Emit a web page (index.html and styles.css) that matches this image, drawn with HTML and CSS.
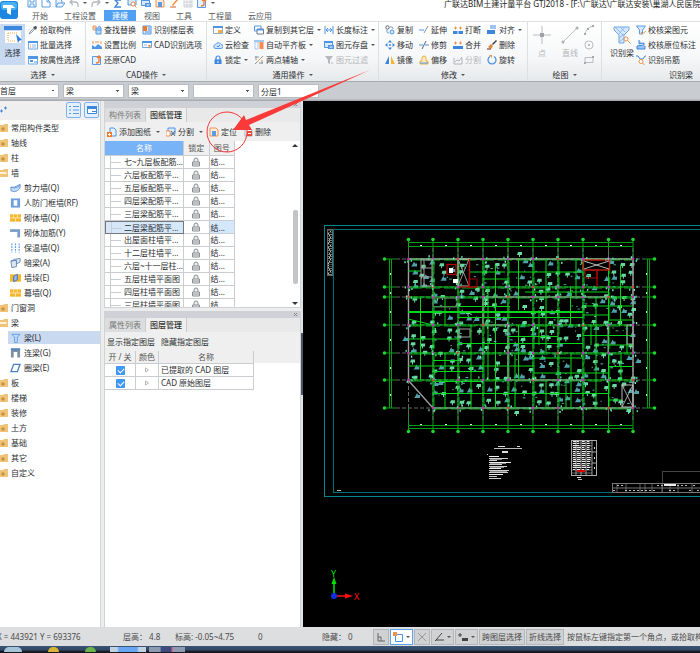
FILE: index.html
```html
<!DOCTYPE html>
<html lang="zh-CN">
<head>
<meta charset="utf-8">
<title>广联达BIM土建计量平台 GTJ2018</title>
<link rel="stylesheet" href="styles.css">
</head>
<body>
<svg class="sprite" aria-hidden="true">
  <symbol id="save" viewBox="0 0 10 10"><path d="M1 1h8v8H1zM3 1v3h4V1M3 9V6h4v3" fill="none" stroke="#5a9be6"/></symbol>
  <symbol id="new" viewBox="0 0 10 10"><path d="M1 1h5l3 3v5H1zM6 1v3h3" fill="none" stroke="#5a9be6"/></symbol>
  <symbol id="open" viewBox="0 0 10 10"><path d="M1 9V1h4l2 2v2M1 9l2-4h7L7 9z" fill="#eaf3ff" stroke="#5a9be6"/></symbol>
  <symbol id="undo" viewBox="0 0 10 10"><path d="M1 4h5q3 0 3 3v2M4 1 1 4l3 3" fill="none" stroke="#b4b8be" stroke-width="1.3"/></symbol>
  <symbol id="redo" viewBox="0 0 10 10"><path d="M9 4H4Q1 4 1 7v2M6 1l3 3-3 3" fill="none" stroke="#b4b8be" stroke-width="1.3"/></symbol>
  <symbol id="sigma" viewBox="0 0 10 10"><path d="M8 2H2l3 3-3 4h6" fill="none" stroke="#3d86dd" stroke-width="1.4"/></symbol>
  <symbol id="find" viewBox="0 0 10 10"><path d="M1 1h8v6H1z" fill="#d6e8fc" stroke="#4e96e5"/><circle cx="6" cy="6" r="2" fill="#fff" stroke="#f08a3c"/><path d="m7.500 7.500 2 2" stroke="#f08a3c"/></symbol>
  <symbol id="pen" viewBox="0 0 10 10"><path d="m3 7 5-6 1 1-5 6z" fill="#f08a3c"/><path d="M1 9h6" stroke="#e05a2a"/></symbol>
  <symbol id="grid" viewBox="0 0 10 10"><path d="M1 1h8v8H1zM1 4h8M1 7h8M4 1v8M7 1v8" fill="none" stroke="#c2c5ca" stroke-width=".8"/></symbol>
  <symbol id="pick" viewBox="0 0 10 10"><path d="m1 9 1-2 4-4 1 1-4 4z" fill="#e8eef6" stroke="#7a8796" stroke-width=".8"/><path d="m5 2 3 3 1-3-1-1z" fill="#3f4a58"/></symbol>
  <symbol id="batch" viewBox="0 0 10 10"><path d="M.5 1.500h9v7.500h-9z" fill="#fff" stroke="#6ea8e8"/><path d="M0 1h10v2H0z" fill="#4e96e5"/><path d="M2 5h1M2 7h1" stroke="#f08a3c"/><path d="M4 5h4M4 7h4" stroke="#8bb8ec"/></symbol>
  <symbol id="attr" viewBox="0 0 10 10"><path d="M.5 1.500h9v7.500h-9z" fill="#fff" stroke="#6ea8e8"/><path d="M0 1h10v3H0zM2 5h3v2H2z" fill="#4e96e5"/><path d="M6 7h3" stroke="#4e96e5"/></symbol>
  <symbol id="replace" viewBox="0 0 10 10"><path d="M1 1h3v2H1zM1 3v2h3" fill="none" stroke="#f0924c"/><path d="M4 3h5v6H4z" fill="#bddafa" stroke="#4e96e5"/><path d="M4 5h5M6 2q2-2 3 1" fill="none" stroke="#4e96e5"/></symbol>
  <symbol id="scale" viewBox="0 0 10 10"><path d="M0 9V5l3 2 3-3 4 3v2z" fill="#4e96e5"/><path d="M1 1v3M9 1v3M3 2h4" stroke="#f0924c"/></symbol>
  <symbol id="restore" viewBox="0 0 10 10"><path d="M.5 1.500h8v8h-8z" fill="#e3f0ff" stroke="#5a9be6"/><path d="M7 1v5q0 2-3 2M5 3l2-2 2 2" fill="none" stroke="#f07a28" stroke-width="1.300"/></symbol>
  <symbol id="floor" viewBox="0 0 10 10"><path d="M1 1h8v8H1z" fill="#dbeafd" stroke="#4e96e5"/><path d="M1 1h4v5H1z" fill="#f07a28"/><path d="M6 3h2M6 5h2M3 7h5" stroke="#4e96e5"/></symbol>
  <symbol id="opts" viewBox="0 0 10 10"><path d="M.5 1.500h9v6h-9z" fill="#fff" stroke="#6ea8e8"/><path d="M0 1h10v2H0z" fill="#4e96e5"/><path d="M2 5h3" stroke="#8bb8ec"/><path d="M6 5h3L7.500 9z" fill="#f0924c"/></symbol>
  <symbol id="def" viewBox="0 0 10 10"><path d="M.5 1.500h9v7h-9z" fill="#fff" stroke="#9ab"/><path d="M0 1h10v2H0z" fill="#4e96e5"/><path d="M5 5h4v3H5z" fill="#f5a94a"/></symbol>
  <symbol id="cloud" viewBox="0 0 10 10"><path d="M3 8.500a2 2 0 0 1-.5-4 3 3 0 0 1 5.500 0 2 2 0 0 1 0 4z" fill="#cfe3fb" stroke="#5a9be6"/><path d="m4 6 1 1 2-2" fill="none" stroke="#3d86dd"/></symbol>
  <symbol id="lock" viewBox="0 0 10 10"><path d="M3 5V3a2 2 0 0 1 4 0v2" fill="none" stroke="#3d86dd" stroke-width="1.200"/><path d="M1.500 4.500h7V9h-7z" fill="#3d86dd"/><path d="M5 6v2" stroke="#fff"/></symbol>
  <symbol id="copyf" viewBox="0 0 10 10"><path d="M.5 1h6.500v3M.5 1v5H3" fill="none" stroke="#4e96e5"/><path d="M3 4h6.500v5H3z" fill="#fff" stroke="#6b7a8c"/><path d="M3 4h7v1.500H3z" fill="#4e96e5"/></symbol>
  <symbol id="align" viewBox="0 0 10 10"><path d="M0 1h10" stroke="#4e96e5"/><path d="M1 2h3v7H1z" fill="#fff" stroke="#a9c8ee"/><path d="M5.500 2h4v7h-4z" fill="#f58a52"/></symbol>
  <symbol id="axis" viewBox="0 0 10 10"><path d="M1 9 9 1M1 2h4M2 1v4M5 8h4M8 5v4" fill="none" stroke="#8b95a2"/><path d="m3 7 4-4" stroke="#f0924c"/></symbol>
  <symbol id="dim" viewBox="0 0 10 10"><path d="M1 1v8M9 1v8M2 5h6M4 3 2 5l2 2M6 3l2 2-2 2" fill="none" stroke="#4e96e5"/></symbol>
  <symbol id="store" viewBox="0 0 10 10"><path d="M.5 1.500h8v6h-8z" fill="#d9e9fd" stroke="#4e96e5"/><path d="M0 1h9v2H0zM4 5h6v4H4z" fill="#4e96e5"/><path d="M5.500 7h3" stroke="#fff"/></symbol>
  <symbol id="filter" viewBox="0 0 10 10"><path d="M1 1h8L6 5v4L4 8V5z" fill="#b5b8bd"/><path d="M7 8h2" stroke="#b5b8bd"/></symbol>
  <symbol id="copy" viewBox="0 0 10 10"><circle cx="2.500" cy="2.500" r="1.700" fill="none" stroke="#59636f"/><circle cx="7" cy="7" r="2" fill="#d9e9fd" stroke="#4e96e5"/><path d="M5 2h2q1 0 1 2M2 5v2q0 1 2 1" fill="none" stroke="#6f9bd0"/></symbol>
  <symbol id="move" viewBox="0 0 10 10"><path d="M5 0 7 2.500H3zM5 10 3 7.500h4zM0 5l2.500-2v4zM10 5 7.500 7V3z" fill="#3d86dd"/><circle cx="5" cy="5" r="1" fill="#3d86dd"/></symbol>
  <symbol id="mirror" viewBox="0 0 10 10"><path d="M4 1v8H0z" fill="#3d86dd"/><path d="M6 1v8h4z" fill="#f5b62e"/></symbol>
  <symbol id="extend" viewBox="0 0 10 10"><path d="M0 5h5" stroke="#4e96e5"/><path d="M5 8 9 1" stroke="#8b95a2"/></symbol>
  <symbol id="trim" viewBox="0 0 10 10"><path d="M0 5h4M6 5h4" stroke="#4e96e5"/><path d="M3 9 7 1" stroke="#59636f"/></symbol>
  <symbol id="offset" viewBox="0 0 10 10"><path d="M3 6V3a2 2 0 0 1 4 0v3h2v3H1V6z" fill="#fdecc4" stroke="#efb13a"/><path d="M1 8h8" stroke="#4e96e5"/></symbol>
  <symbol id="break" viewBox="0 0 10 10"><path d="M0 6h4.500v3H0zM5.500 6H10v3H5.500z" fill="#3d86dd"/><path d="M1 3h3M2.500 1.500v3M6 3h3M7.500 1.500v3" stroke="#f0924c"/></symbol>
  <symbol id="merge" viewBox="0 0 10 10"><path d="M0 6h10v3H0z" fill="#3d86dd"/><path d="M1 3h3M2.500 1.500v3M6 3h3M7.500 1.500v3" stroke="#f0924c"/></symbol>
  <symbol id="split" viewBox="0 0 10 10"><path d="M1 3v6h8V3M2 7l2-2 2 1 3-4" fill="none" stroke="#b0b3b8"/></symbol>
  <symbol id="alignb" viewBox="0 0 10 10"><path d="M3 0h6v4H3z" fill="#9cc5f5"/><path d="M0 5h8v4H0z" fill="#3d86dd"/></symbol>
  <symbol id="erase" viewBox="0 0 10 10"><path d="m5 4 4-4 1 1-4 4z" fill="#3a3f47"/><path d="m1 7 3-3 2 2-2 3z" fill="#e0883c"/><path d="M0 9h4" stroke="#7d1f12"/></symbol>
  <symbol id="rotate" viewBox="0 0 10 10"><path d="M7 1.500a4 4 0 1 1-4 0" fill="none" stroke="#4e96e5" stroke-width="1.300"/><path d="M2 0h3v3z" fill="#f0924c"/></symbol>
  <symbol id="big-select" viewBox="0 0 18 18"><path d="M0 0h18v4H0z" fill="#3c86dd"/><path d="M.5 4.500h17v13H.5z" fill="#fff" stroke="#c9d8ea"/><path d="M4 7h10M4 7v8h7" fill="none" stroke="#f5a94a" stroke-dasharray="1 1"/><path d="m12 8 6 6-2.500.5L14 17z" fill="#2f7ad6"/></symbol>
  <symbol id="point" viewBox="0 0 18 18"><path d="M9 0v18M0 9h18" stroke="#b9bcc1"/><path d="M7 7h4v4H7z" fill="#9da1a7"/></symbol>
  <symbol id="line" viewBox="0 0 18 18"><path d="M2 16 16 2" stroke="#b9bcc1"/><circle cx="2" cy="16" r="1.500" fill="#aaadb2"/><circle cx="16" cy="2" r="1.500" fill="#aaadb2"/></symbol>
  <symbol id="arc" viewBox="0 0 10 10"><path d="M1 9Q2 3 9 1" fill="none" stroke="#b9bcc1"/><path d="M0 8h2v2H0zM8 0h2v2H8zM3 3h2v2H3z" fill="#a5a8ad"/></symbol>
  <symbol id="circ" viewBox="0 0 10 10"><circle cx="5" cy="5" r="4" fill="none" stroke="#b9bcc1"/><circle cx="5" cy="5" r="1" fill="#a5a8ad"/></symbol>
  <symbol id="rect" viewBox="0 0 10 10"><path d="M1 2.500h8v5H1z" fill="none" stroke="#b9bcc1"/><path d="M0 7h2v2H0zM8 1h2v2H8z" fill="#a5a8ad"/></symbol>
  <symbol id="big-beam" viewBox="0 0 18 18"><path d="M1 1h15v3l-5 5v8H6V9L1 4z" fill="#d6e8fc" stroke="#6ea8e8"/><path d="m2 1 8 8M7 1l5 5M12 1 6 8M6 12l5-4M6 16l5-4" stroke="#8bb8ec"/><circle cx="13" cy="13" r="2" fill="#fff" stroke="#f0924c"/><path d="m14.500 14.500 3 3" stroke="#f0924c"/></symbol>
  <symbol id="chk1" viewBox="0 0 10 10"><path d="M.5 1h9L6.500 5v4h-3V5z" fill="#d6e8fc" stroke="#5a9be6"/><path d="m5 7 1.500 2L10 6" fill="none" stroke="#f0924c"/></symbol>
  <symbol id="chk2" viewBox="0 0 10 10"><path d="M3 0v4l5-1v2L1 6v3h8V6" fill="#9cc5f5" stroke="#3d86dd"/></symbol>
  <symbol id="hang" viewBox="0 0 10 10"><path d="M0 1h2l2 3h3l2-3h1" fill="none" stroke="#3d86dd"/><circle cx="5" cy="6.500" r="2" fill="#fff" stroke="#f0924c"/><path d="m6.500 8 2 2" stroke="#f0924c"/></symbol>
  <symbol id="folder" viewBox="0 0 8 10"><path d="M0 2h3l1-1h4v8H0z" fill="#efc479"/><path d="M1 6h4M3 4v4" stroke="#b98632"/></symbol>
  <symbol id="folder-open" viewBox="0 0 8 10"><path d="M0 2h3l1-1h4v8H0z" fill="#efc479"/><path d="M0 4h6l1 2H0z" fill="#fdf1d6"/></symbol>
  <symbol id="w1" viewBox="0 0 12 10"><path d="M1 4q4 1 6-1l4-2v4L8 8Q5 10 1 8z" fill="#c4dcf7" stroke="#6296d2"/><path d="M1 4q4 2 7 0l3-2" fill="none" stroke="#6296d2"/></symbol>
  <symbol id="w2" viewBox="0 0 12 10"><path d="M1 0h10v10H1z" fill="#6d9fdc"/><path d="M4 2h4v6H4z" fill="#fff"/></symbol>
  <symbol id="w3" viewBox="0 0 12 10"><path d="M0 1h12v8H0z" fill="#f5b62e"/><path d="M0 5h12M4 1v4M8 1v4M6 5v4" stroke="#fde6ac"/></symbol>
  <symbol id="w4" viewBox="0 0 12 10"><path d="M0 1h11v9H8V4H0z" fill="#8ea2b8"/><path d="M1 2h9v7" fill="none" stroke="#5a9be6"/></symbol>
  <symbol id="w5" viewBox="0 0 12 10"><path d="M2 0v10M6 0v10M10 0v10" stroke="#5a9be6" stroke-width="1.300" stroke-dasharray="2 1"/></symbol>
  <symbol id="w6" viewBox="0 0 12 10"><path d="m1 3 4-2 6-1v4L7 6v3l-5 1z" fill="#dce6f2" stroke="#6b87a8"/><path d="m1 3 6-1v4" fill="none" stroke="#4a7fbd"/></symbol>
  <symbol id="w7" viewBox="0 0 12 10"><path d="M0 1h12v8H0z" fill="#f5b62e"/><path d="m4 3 4-2v6L4 9z" fill="#8fbcf0" stroke="#3972b8"/></symbol>
  <symbol id="b1" viewBox="0 0 12 10"><path d="M2 1h9L8 4v6H5V4z" fill="#c4dcf7" stroke="#5a9be6"/></symbol>
  <symbol id="b2" viewBox="0 0 12 10"><path d="M1 0h10v10H8V4H4v6H1z" fill="#7d8fa3"/><path d="M1 1h10" stroke="#4f83c0" stroke-width="2"/></symbol>
  <symbol id="b3" viewBox="0 0 12 10"><path d="M4 1h7L8 9H1z" fill="none" stroke="#4b80c4" stroke-width="1.500"/></symbol>
  <symbol id="add" viewBox="0 0 10 10"><path d="M3 1h4l2 2v6H3z" fill="#e3f0ff" stroke="#4e96e5"/><path d="M0 5h5v5H0z" fill="#f07a28"/><path d="M1 7.500h3M2.500 6v3" stroke="#fff"/></symbol>
  <symbol id="cut" viewBox="0 0 10 10"><path d="M2 1h7v6H2z" fill="#d9e9fd" stroke="#4e96e5"/><path d="M0 4h4v5H0z" fill="#fff" stroke="#f0924c"/><path d="m5 4 4 5M9 4 5 9" stroke="#59636f"/></symbol>
  <symbol id="loc" viewBox="0 0 10 10"><path d="M1 1h6l2 2v6H1z" fill="#fdeadb" stroke="#f0924c"/><path d="M3 4h4v5H3z" fill="#5a9be6"/></symbol>
  <symbol id="del" viewBox="0 0 10 10"><path d="M2 1h5l2 2v6H2z" fill="#fff" stroke="#a5b3c4"/><path d="M4 4h5v5H4z" fill="#e8483b"/><path d="M5 6.500h3" stroke="#fff"/></symbol>
  <symbol id="plock" viewBox="0 0 10 10"><path d="M3 5V3a2 2 0 0 1 4 0v2M1.500 5h7v4h-7zM2 7h6" fill="#eee" stroke="#8b8f94"/></symbol>
  <symbol id="close" viewBox="0 0 5 5"><path d="m1 1 3 3M4 1 1 4" stroke="#888"/></symbol>
  <symbol id="ortho" viewBox="0 0 10 10"><path d="M2 1v8h7M2 5h3v4" fill="none" stroke="#666"/></symbol>
  <symbol id="snap" viewBox="0 0 10 10"><path d="M2.500 2.500h7v7h-7z" fill="#fff" stroke="#4e96e5"/><path d="M0 0h4v4H0z" fill="#f0924c"/></symbol>
  <symbol id="cross" viewBox="0 0 10 10"><path d="m1 1 8 8M9 1 1 9" stroke="#999"/></symbol>
  <symbol id="angle" viewBox="0 0 10 10"><path d="M8 1 2 8h8M1 9l2-2" fill="none" stroke="#444"/></symbol>
  <symbol id="plus" viewBox="0 0 10 10"><path d="M0 3h4M2 1v4" stroke="#444"/><path d="M4 6h6v3H4z" fill="#444"/></symbol>
</svg>

<header class="top">
  <svg class="logo" viewBox="0 0 18 18"><rect width="18" height="18" rx="3" fill="#1c86e0"/><rect x="1" y="1" width="16" height="8" rx="3" fill="#48b0f3"/><path d="M3 4h9l3 3h-4v7l-4-2V7H3z" fill="#fff"/></svg>
  <div class="top-main">
    <div class="title-row">
      <div class="quick">
        <svg><use href="#save"/></svg><svg><use href="#new"/></svg><svg><use href="#open"/></svg><svg><use href="#undo"/></svg><i class="caret"></i><svg><use href="#redo"/></svg><i class="caret"></i><svg><use href="#sigma"/></svg><svg><use href="#find"/></svg><svg><use href="#store"/></svg><svg><use href="#loc"/></svg><svg><use href="#pen"/></svg><svg><use href="#grid"/></svg><svg><use href="#restore"/></svg><i class="caret"></i>
      </div>
      <div class="title">广联达BIM土建计量平台 GTJ2018 - [F:\广联达\广联达安装\巢湖人民医院医</div>
    </div>
    <nav class="tabs">
      <a href="#">开始</a><a href="#">工程设置</a><a href="#" class="on">建模</a><a href="#">视图</a><a href="#">工具</a><a href="#">工程量</a><a href="#">云应用</a>
    </nav>
  </div>
</header>

<section class="ribbon">
  <div class="group">
    <div class="tools">
      <button class="big picked"><svg><use href="#big-select"/></svg>选择</button>
      <div class="col"><button><svg><use href="#pick"/></svg>拾取构件</button><button><svg><use href="#batch"/></svg>批量选择</button><button><svg><use href="#attr"/></svg>按属性选择</button></div>
    </div>
    <div class="cap">选择<i class="caret"></i></div>
  </div>
  <div class="group">
    <div class="tools lead">
      <div class="col c50"><button><svg><use href="#replace"/></svg>查找替换</button><button><svg><use href="#scale"/></svg>设置比例</button><button><svg><use href="#restore"/></svg>还原CAD</button></div>
      <div class="col"><button><svg><use href="#floor"/></svg>识别楼层表</button><button><svg><use href="#opts"/></svg>CAD识别选项</button></div>
    </div>
    <div class="cap">CAD操作<i class="caret"></i></div>
  </div>
  <div class="group">
    <div class="tools lead">
      <div class="col c41"><button><svg><use href="#def"/></svg>定义</button><button><svg><use href="#cloud"/></svg>云检查</button><button><svg><use href="#lock"/></svg>锁定<i class="caret"></i></button></div>
      <div class="col c70"><button><svg><use href="#copyf"/></svg>复制到其它层<i class="caret"></i></button><button><svg><use href="#align"/></svg>自动平齐板<i class="caret"></i></button><button><svg><use href="#axis"/></svg>两点辅轴<i class="caret"></i></button></div>
      <div class="col"><button><svg><use href="#dim"/></svg>长度标注<i class="caret"></i></button><button><svg><use href="#store"/></svg>图元存盘<i class="caret"></i></button><button class="off" disabled><svg><use href="#filter"/></svg>图元过滤</button></div>
    </div>
    <div class="cap">通用操作<i class="caret"></i></div>
  </div>
  <div class="group">
    <div class="tools lead">
      <div class="col c34"><button><svg><use href="#copy"/></svg>复制</button><button><svg><use href="#move"/></svg>移动</button><button><svg><use href="#mirror"/></svg>镜像</button></div>
      <div class="col c34"><button><svg><use href="#extend"/></svg>延伸</button><button><svg><use href="#trim"/></svg>修剪</button><button><svg><use href="#offset"/></svg>偏移</button></div>
      <div class="col c34"><button><svg><use href="#break"/></svg>打断</button><button><svg><use href="#merge"/></svg>合并</button><button class="off" disabled><svg><use href="#split"/></svg>分割</button></div>
      <div class="col"><button><svg><use href="#alignb"/></svg>对齐<i class="caret"></i></button><button><svg><use href="#erase"/></svg>删除</button><button><svg><use href="#rotate"/></svg>旋转</button></div>
    </div>
    <div class="cap">修改<i class="caret"></i></div>
  </div>
  <div class="group">
    <div class="tools">
      <button class="big off" disabled><svg><use href="#point"/></svg>点</button>
      <button class="big off" disabled><svg><use href="#line"/></svg>直线</button>
      <div class="col"><button aria-label="弧"><svg><use href="#arc"/></svg></button><button aria-label="圆"><svg><use href="#circ"/></svg></button><button aria-label="矩形"><svg><use href="#rect"/></svg></button></div>
    </div>
    <div class="cap">绘图<i class="caret"></i></div>
  </div>
  <div class="group last">
    <div class="tools lead">
      <button class="big"><svg><use href="#big-beam"/></svg>识别梁</button>
      <div class="col"><button><svg><use href="#chk1"/></svg>校核梁图元</button><button><svg><use href="#chk2"/></svg>校核原位标注</button><button><svg><use href="#hang"/></svg>识别吊筋</button></div>
    </div>
    <div class="cap wide">识别梁</div>
  </div>
</section>

<div class="filters">
  <select aria-label="楼层"><option>首层</option></select>
  <select aria-label="类别"><option>梁</option></select>
  <select aria-label="构件类型"><option>梁</option></select>
  <select aria-label="构件"><option></option></select>
  <input aria-label="分层" value="分层1">
</div>

<main class="work">
  <aside class="nav">
    <div class="nav-bar">
      <svg class="pin" viewBox="0 0 10 10"><path d="m0 6 2-2v4zM7 3 5 1v4z" fill="#3d86dd"/><path d="M1 6h2M4 3h2" stroke="#3d86dd"/></svg>
      <button aria-label="列表"><svg viewBox="0 0 10 10"><path d="M0 1.500h2M0 5h2M0 8.500h2M4 1.500h6M4 5h6M4 8.500h6" stroke="#5a9be6"/></svg></button>
      <button aria-label="窗口"><svg viewBox="0 0 10 10"><path d="M.5 1.500h9v7h-9z" fill="#fff" stroke="#3d86dd"/><path d="M0 1h10v3H0zM5 6h4v1H5z" fill="#3d86dd"/></svg></button>
    </div>
    <ul class="tree">
      <li><svg><use href="#folder"/></svg>常用构件类型</li>
      <li><svg><use href="#folder"/></svg>轴线</li>
      <li><svg><use href="#folder"/></svg>柱</li>
      <li><svg><use href="#folder-open"/></svg>墙</li>
      <li class="sub"><svg><use href="#w1"/></svg>剪力墙(Q)</li>
      <li class="sub"><svg><use href="#w2"/></svg>人防门框墙(RF)</li>
      <li class="sub"><svg><use href="#w3"/></svg>砌体墙(Q)</li>
      <li class="sub"><svg><use href="#w4"/></svg>砌体加筋(Y)</li>
      <li class="sub"><svg><use href="#w5"/></svg>保温墙(Q)</li>
      <li class="sub"><svg><use href="#w6"/></svg>暗梁(A)</li>
      <li class="sub"><svg><use href="#w7"/></svg>墙垛(E)</li>
      <li class="sub"><svg><use href="#w3"/></svg>幕墙(Q)</li>
      <li><svg><use href="#folder"/></svg>门窗洞</li>
      <li><svg><use href="#folder-open"/></svg>梁</li>
      <li class="sub sel"><svg><use href="#b1"/></svg>梁(L)</li>
      <li class="sub"><svg><use href="#b2"/></svg>连梁(G)</li>
      <li class="sub"><svg><use href="#b3"/></svg>圈梁(E)</li>
      <li><svg><use href="#folder"/></svg>板</li>
      <li><svg><use href="#folder"/></svg>楼梯</li>
      <li><svg><use href="#folder"/></svg>装修</li>
      <li><svg><use href="#folder"/></svg>土方</li>
      <li><svg><use href="#folder"/></svg>基础</li>
      <li><svg><use href="#folder"/></svg>其它</li>
      <li><svg><use href="#folder"/></svg>自定义</li>
    </ul>
  </aside>

  <div class="docks">
    <section class="dock drawings">
      <div class="grip"><button aria-label="关闭"><svg><use href="#close"/></svg></button></div>
      <div class="dock-tabs"><button>构件列表</button><button class="on">图纸管理</button></div>
      <div class="dock-bar">
        <button><svg><use href="#add"/></svg>添加图纸<i class="caret"></i></button>
        <button><svg><use href="#cut"/></svg>分割<i class="caret"></i></button>
        <button><svg><use href="#loc"/></svg>定位</button>
        <button><svg><use href="#del"/></svg>删除</button>
      </div>
      <div class="list">
        <table class="sheets">
          <thead><tr><th class="name on">名称</th><th>锁定</th><th>图号</th></tr></thead>
          <tbody>
            <tr><td>七~九层板配筋...</td><td><svg><use href="#plock"/></svg></td><td>结...</td></tr>
            <tr><td>六层板配筋平...</td><td><svg><use href="#plock"/></svg></td><td>结...</td></tr>
            <tr><td>五层板配筋平...</td><td><svg><use href="#plock"/></svg></td><td>结...</td></tr>
            <tr><td>四层梁配筋平...</td><td><svg><use href="#plock"/></svg></td><td>结...</td></tr>
            <tr><td>三层梁配筋平...</td><td><svg><use href="#plock"/></svg></td><td>结...</td></tr>
            <tr class="sel"><td>二层梁配筋平...</td><td><svg><use href="#plock"/></svg></td><td>结...</td></tr>
            <tr><td>出屋面柱墙平...</td><td><svg><use href="#plock"/></svg></td><td>结...</td></tr>
            <tr><td>十二层柱墙平...</td><td><svg><use href="#plock"/></svg></td><td>结...</td></tr>
            <tr><td>六层~十一层柱...</td><td><svg><use href="#plock"/></svg></td><td>结...</td></tr>
            <tr><td>五层柱墙平面图</td><td><svg><use href="#plock"/></svg></td><td>结...</td></tr>
            <tr><td>四层柱墙平面图</td><td><svg><use href="#plock"/></svg></td><td>结...</td></tr>
            <tr><td>三层柱墙平面图</td><td><svg><use href="#plock"/></svg></td><td>结...</td></tr>
          </tbody>
        </table>
        <div class="scroll"><i class="up"></i><span></span><i class="down"></i></div>
      </div>
    </section>
    <section class="dock layers">
      <div class="grip"><button aria-label="关闭"><svg><use href="#close"/></svg></button></div>
      <div class="dock-tabs"><button>属性列表</button><button class="on">图层管理</button></div>
      <div class="dock-bar text"><button>显示指定图层</button><button>隐藏指定图层</button></div>
      <div class="layer-list">
        <table class="layer-table">
          <thead><tr><th class="c-on">开 / 关</th><th class="c-color">颜色</th><th class="c-name">名称</th></tr></thead>
          <tbody>
            <tr><td><input type="checkbox" checked aria-label="已提取的 CAD 图层"></td><td><svg class="tri" viewBox="0 0 4 6"><path d="m.5 1 3 2-3 2z" fill="#fff" stroke="#999" stroke-width=".7"/></svg></td><td class="left">已提取的 CAD 图层</td></tr>
            <tr><td><input type="checkbox" checked aria-label="CAD 原始图层"></td><td><svg class="tri" viewBox="0 0 4 6"><path d="m.5 1 3 2-3 2z" fill="#fff" stroke="#999" stroke-width=".7"/></svg></td><td class="left">CAD 原始图层</td></tr>
          </tbody>
        </table>
      </div>
    </section>
  </div>
  <div class="edge"><span></span></div>
  <div class="canvas">
    <svg id="plan" viewBox="303 101 397 526" preserveAspectRatio="xMinYMin slice"></svg>
  </div>
</main>

<footer class="status">
  <span class="xy">X = 443921 Y = 693376</span>
  <span class="s-floor">层高： 4.8</span>
  <span class="s-level">标高: -0.05~4.75</span>
  <span class="s-zero">0</span>
  <span class="s-hide">隐藏： 0</span>
  <div class="s-tools">
    <button aria-label="正交"><svg><use href="#ortho"/></svg></button>
    <button class="on" aria-label="捕捉"><svg><use href="#snap"/></svg><i class="caret"></i></button>
    <button aria-label="交点"><svg><use href="#cross"/></svg></button>
    <button aria-label="角度"><svg><use href="#angle"/></svg><i class="caret"></i></button>
    <button aria-label="偏移"><svg><use href="#plus"/></svg><i class="caret"></i></button>
    <button>跨图层选择</button>
    <button>折线选择</button>
  </div>
  <span class="hint">按鼠标左键指定第一个角点，或拾取构件</span>
</footer>
<div class="taskbar"><i class="orb"></i><i class="dot yellow"></i><i class="dot green"></i><i class="app blue"></i><i class="app rose"></i></div>

<svg class="marker" viewBox="0 0 170 90" aria-hidden="true">
  <circle cx="27" cy="64" r="20" fill="none" stroke="#f5383a"/>
  <path d="M170 2 49 57l3 5-19 0 11-15 2 5z" fill="#f93a38"/>
</svg>
<script src="plan.js"></script>
</body>
</html>
```
FILE: styles.css
```css
* { box-sizing: border-box; }
body {
  margin: 0;
  height: 100vh;
  display: flex;
  flex-direction: column;
  overflow: hidden;
  position: relative;
  background: #fff;
  color: #2d2f33;
  font-family: "Noto Sans", "Noto Sans CJK SC", sans-serif;
  font-size: 8px;
  line-height: 12px;
  white-space: nowrap;
}
button, input, select { font: inherit; color: inherit; margin: 0; border-radius: 0; }
button { display: flex; align-items: center; padding: 0; border: 0; background: none; white-space: nowrap; }
svg { flex: none; width: 10px; height: 10px; }
.sprite { position: absolute; width: 0; height: 0; }
.caret {
  flex: none;
  border: 2px solid transparent;
  border-top-color: #555;
  border-bottom: 0;
  margin-left: 4px;
}

.top { display: flex; flex: none; height: 22px; border-bottom: 1px solid #dfe1e4; }
.top .logo { width: 18px; height: 18px; margin: 1px 9px 0 0; }
.top-main { flex: 1; min-width: 0; }
.title-row { display: flex; height: 10px; overflow: hidden; align-items: center; }
.quick { display: flex; align-items: center; gap: 4px; width: 417px; flex: none; margin-top: -4px; }
.quick .caret { margin: 0; }
.title { color: #222; margin-top: -2px; }
.tabs { display: flex; margin-left: -3px; }
.tabs a { color: #55585c; text-decoration: none; padding: 0 8px; height: 11px; line-height: 11px; }
.tabs .on { background: #4f9ff3; color: #fff; }

.ribbon {
  flex: none;
  display: grid;
  grid-template-columns: 86px 121px 172px 149px 74px 1fr;
  height: 60px;
  background: linear-gradient(#fff, #f6f7f8 60%, #e6e9eb);
  border-bottom: 1px solid #a9acb1;
  overflow: hidden;
}
.group { display: flex; flex-direction: column; border-right: 1px solid #dde0e3; min-width: 0; }
.group.last { border: 0; }
.tools { display: flex; flex: 1; }
.tools.lead { padding-left: 6px; }
.col { display: flex; flex-direction: column; }
.col button { height: 15px; gap: 2px; }
.col .caret { margin-left: 1px; }
.c34 { width: 34px; }
.c41 { width: 41px; }
.c50 { width: 50px; }
.c70 { width: 70px; }
.big { flex-direction: column; width: 28px; height: 41px; margin-top: 2px; padding-top: 2px; gap: 3px; }
.big svg { width: 18px; height: 18px; }
.picked { width: 25px; margin-right: 3px; background: #c7daf2; }
.off { color: #b3b6ba; }
.cap { text-align: center; height: 15px; display: flex; justify-content: center; align-items: center; }
.cap.wide { padding-left: 60px; }

.filters { flex: none; display: flex; gap: 4px; height: 18px; padding: 2px 0; background: #c9ccd1; border-bottom: 1px solid #b5b8bd; }
.filters select, .filters input { width: 61px; height: 14px; border: 1px solid #b9bcc1; background: #fff; padding: 0 2px; appearance: none; }
.filters select {
  background: linear-gradient(to bottom right, #555 50%, transparent 50%) no-repeat right 3px top 5px / 2px 2px, linear-gradient(to bottom left, #555 50%, transparent 50%) no-repeat right 5px top 5px / 2px 2px, #fff;
}
.filters select:first-child { width: 59px; padding: 0; border-left: 0; }

.work { flex: 1; display: flex; min-height: 0; border-top: 1px solid #a9acb1; background: #eceded; }
.nav { width: 101px; flex: none; background: #fff; border-right: 1px solid #d3d5d8; }
.nav-bar { display: flex; gap: 3px; height: 19px; background: #efefef; padding: 1px 1px 0 0; }
.nav-bar .pin { margin: 3px auto 0 0; }
.nav-bar button { width: 15px; height: 16px; justify-content: center; border: 1px solid #7fb2ef; border-radius: 2px; background: #e4f0fe; }
.tree { list-style: none; margin: 0; padding: 0; }
.tree li { display: flex; align-items: center; height: 15px; gap: 3px; }
.tree li svg { width: 8px; }
.tree .sub { margin-left: 8px; padding-left: 2px; }
.tree .sub svg { width: 11px; }
.tree .sel { background: linear-gradient(#c9d9ef, #c9d9ef) no-repeat 0 1px / 100% 13px; }

.docks { width: 197px; flex: none; margin-left: 3px; display: flex; flex-direction: column; gap: 3px; }
.dock { background: #fff; border: 1px solid #d0d2d5; border-width: 0 1px; overflow: hidden; }
.drawings { flex: none; height: 207px; border-bottom-width: 1px; }
.layers { flex: 1; display: flex; flex-direction: column; }
.grip { display: flex; justify-content: flex-end; align-items: center; height: 7px; background: #cfd1d6; padding-right: 2px; flex: none; }
.grip svg { width: 5px; height: 5px; }
.dock-tabs { display: flex; height: 14px; background: #e9e9ea; flex: none; }
.dock-tabs button { padding: 0 4px; color: #777; background: #dcddde; border-right: 1px solid #c9cbce; }
.dock-tabs .on { color: #333; background: #efefef; font-weight: 500; }
.dock-bar { display: flex; gap: 6px; height: 19px; padding-left: 2px; background: #efefef; flex: none; }
.dock-bar button { gap: 2px; }
.dock-bar .caret { margin-left: 3px; }
.list { display: flex; justify-content: space-between; }
table { border-collapse: separate; border-spacing: 0; table-layout: fixed; }
th, td { padding: 0; font-weight: 400; overflow: hidden; border-right: 1px solid #c9ccd0; border-bottom: 1px solid #c9ccd0; text-align: center; }
th { background: #efefef; color: #555; }
td svg { display: block; margin: auto; }
.sheets { width: 130px; }
.sheets th { height: 15px; }
.sheets .name { width: 79px; }
.sheets th.on { background: #78b2f7; color: #fff; }
.sheets td { height: 13px; }
.sheets td:first-child {
  text-align: left;
  padding-left: 19px;
  background: linear-gradient(#c9ccd0, #c9ccd0) no-repeat 5px 6px / 11px 1px, linear-gradient(#c9ccd0, #c9ccd0) no-repeat 5px 0 / 1px 100%;
}
.sheets td:last-child { text-align: left; padding-left: 1px; }
.sheets .sel td { line-height: 11px; }
.sheets .sel td:first-child { background-color: #d5e8fb; border: 1px solid #777; padding-left: 18px; }
.sheets .sel td:last-child { background: #d5e8fb; }
.scroll { width: 10px; height: 166px; display: flex; flex-direction: column; align-items: center; justify-content: space-between; }
.scroll span { width: 5px; height: 74px; border-radius: 2px; background: #c4c4c4; margin-top: 44px; }
.scroll i { border: 3px solid transparent; }
.scroll .up { border-bottom-color: #333; border-top: 0; margin-top: 3px; }
.scroll .down { border-top-color: #333; border-bottom: 0; margin-bottom: 2px; }
.layer-list { background: linear-gradient(#efefef, #efefef) no-repeat 0 0 / 100% 12px; }
.layer-table { width: 149px; }
.layer-table th { height: 13px; }
.c-on { width: 31px; }
.c-color { width: 23px; }
.layer-table td { height: 13px; }
.layer-table .left { text-align: left; padding-left: 2px; }
.layer-table input { display: block; appearance: none; width: 9px; height: 9px; margin: 0 auto; border-radius: 1px; background: #3f97f6; overflow: hidden; }
.layer-table input:checked::before { content: ""; display: block; width: 5px; height: 3px; margin: 2px 0 0 2px; border: solid #fff; border-width: 0 0 1px 1px; transform: rotate(-45deg); }
.layer-table .tri { width: 4px; height: 6px; }
.edge { width: 2px; flex: none; background: #dfe2e6; padding-top: 232px; }
.edge span { display: block; height: 62px; background: #4b5563; }
.canvas { flex: 1; min-width: 0; background: #000; overflow: hidden; }
.canvas svg { display: block; width: 100%; height: 100%; }

.status { flex: none; display: flex; align-items: center; height: 19px; background: #dddee0; color: #4a4a4a; overflow: hidden; }
.status span { flex: none; }
.xy { width: 126px; margin-left: -3px; }
.s-floor { width: 52px; }
.s-level { width: 83px; }
.s-zero { width: 64px; }
.s-hide { width: 51px; }
.s-tools { display: flex; gap: 1px; margin-right: 3px; }
.s-tools button { height: 16px; padding: 0 2px; border: 1px solid #b3b5b8; background: #d0d1d3; }
.s-tools .caret { margin-left: 3px; }
.s-tools .on { background: #fff; border-color: #5aa2f2; }
.taskbar { flex: none; display: flex; height: 7px; background: linear-gradient(#3c5576 0, #2f4563 60%, #16181c 80%); overflow: hidden; }
.taskbar i { height: 5px; margin-top: 1px; }
.orb { width: 18px; margin-left: 4px; border-radius: 9px 9px 0 0; background: #a5c4da; }
.dot { width: 11px; margin-left: 26px; border-radius: 5px 5px 0 0; }
.yellow { background: #d9b535; }
.green { background: #69b34a; }
.app { width: 36px; margin-left: 3px; }
.green + .app { margin-left: 14px; }
.blue { background: linear-gradient(90deg, #c3d2e3 20%, #67a7f2 25% 75%, #c3d2e3 80%); }
.rose { background: linear-gradient(90deg, #8c9bb0 30%, #3e4a80 35% 60%, #d06a93 65%, #8c9bb0 70%); }

.marker { position: absolute; left: 200px; top: 68px; width: 170px; height: 90px; pointer-events: none; }
```
FILE: plan.js
```js
// Draws the beam plan, its axes, dimension chains and sheet frame.
const parts = [];
const line = (x1, y1, x2, y2, c, w = 1, extra = '') =>
  parts.push(`<line x1="${x1}" y1="${y1}" x2="${x2}" y2="${y2}" stroke="${c}" stroke-width="${w}" ${extra}/>`);
const box = (x, y, w, h, c, extra = '') =>
  parts.push(`<rect x="${x}" y="${y}" width="${w}" height="${h}" fill="none" stroke="${c}" ${extra}/>`);
const fill = (x, y, w, h, c) =>
  parts.push(`<rect x="${x}" y="${y}" width="${w}" height="${h}" fill="${c}"/>`);
let seed = 7;
const rnd = () => (seed = (seed * 16807) % 2147483647) / 2147483647;

const xs = [408.5, 433, 458, 483, 508, 533, 558, 583, 608.5, 633];
const ys = [259, 287, 297, 325, 353, 380, 408];
const G = '#00d818', D = '#00a014', GREY = '#a0a0a0';

// sheet frame
box(324.5, 225.5, 400, 271, '#00878c');
box(333.5, 229.5, 400, 263, '#006f74');
for (let y = 230; y < 275; y += 2) {
  fill(328, y, 4, 1, rnd() > .5 ? '#777' : '#444');
  fill(328 + Math.floor(rnd() * 3), y + 1, 1, 1, '#bbb');
}
box(327.5, 229.5, 5, 46, '#666');

// axes with bubbles
xs.forEach(x => {
  line(x, 239, x, 259, D);
  line(x, 408, x, 432, D);
  line(x, 248, x, 420, '#666', 1, 'stroke-dasharray="4 2"');
  [239.5, 431.5].forEach(y => parts.push(`<circle cx="${x}" cy="${y}" r="1.8" fill="#19d92b"/>`));
});
ys.forEach(y => {
  line(384, y, 396, y, D);
  line(645, y, 655, y, D);
  line(396, y, 645, y, '#666', 1, 'stroke-dasharray="4 2"');
  [384.5, 654.5].forEach(x => parts.push(`<circle cx="${x}" cy="${y}" r="1.8" fill="#19d92b"/>`));
});
[242.5, 246.5, 425.5, 428.5].forEach(y => line(408, y, 633, y, D));
[389.5, 391.5, 647.5, 649.5].forEach(x => line(x, 259, x, 408, D));
for (let i = 0; i < 9; i++) [245, 424].forEach(y => fill(Math.round((xs[i] + xs[i + 1]) / 2) - 1, y, 2, 1, '#ddd'));
for (let i = 0; i < 6; i++) [390, 646].forEach(x => fill(x, Math.round((ys[i] + ys[i + 1]) / 2), 1, 2, '#ddd'));

// reinforcement labels
const flag = (x, y, up) => {
  const c = up ? '#58b4bd' : '#72f0b4';
  const d = up ? 'l2-4 1 2h2v3h-6z' : 'h4v3h-2v2h-1v-2h-2z';
  parts.push(`<path d="M${x.toFixed(1)} ${y.toFixed(1)}${d}" fill="${c}" opacity=".9"/>`);
};
for (let y = 262; y < 404; y += 8) {
  for (let x = 411; x < 628; x += 9) {
    if (x - 408 < (y - 376) * .9) continue;
    if (rnd() < .6) flag(x + rnd() * 5, y + rnd() * 4, rnd() < .42);
  }
}

// main beams
xs.forEach((x, i) => {
  line(x, 259, x, i === 0 ? 380 : 408, i === 0 || i === 9 ? GREY : G, i === 0 || i === 9 ? 1.4 : 1);
  if (i && i < 9) line(x + 1.2, 262, x + 1.2, 406, D, .8, 'stroke-dasharray="12 3"');
});
ys.forEach((y, i) => {
  line(i === 6 ? 433 : 408, y, 633, y, G, 1.1);
  line(i === 6 ? 433 : 408, y + 1.2, 633, y + 1.2, D, .8, 'stroke-dasharray="14 4"');
});
line(408.5, 259, 633, 259, '#b8b8b8', 1.2);
line(433, 408, 633, 408, '#8fa890');
line(408, 380, 433, 408, GREY, 1.3);
line(483, 297, 608, 297, GREY);
line(483, 297, 483, 325, GREY);
line(483, 325, 508, 325, GREY);
line(508, 325, 508, 380, GREY);
line(508, 380, 583, 380, GREY);
line(608, 325, 608, 353, GREY);

// secondary beams
[[420.500,297,380],[445,297,325],[445,353,408],[471,325,408],[495.500,265,408],[518.500,259,310],[518.500,325,380],[546,259,353],[546,380,408],[570.500,287,325],[571,353,408],[596,297,408],[620.500,265,325],[621,353,380],[488,287,380],[539,310,345],[566,380,408],[576,259,297],[591,325,345],[627,325,353],[515,353,408]]
  .forEach(([x, a, b]) => line(x, a, x, b, G, 1));
[[272,470,505],[272,508,583],[279,483,508],[292,525,608],[306.500,433,510],[306,583,633],[311.500,408,583],[312.500,408,583],[317.500,458,583],[320,608,633],[315,583,608],[336.500,508,558],[339,408,458],[343.500,458,583],[335.500,583,633],[345,597,633],[360.500,433,458],[366,408,535],[358,533,583],[371.500,433,483],[373,533,608],[366.500,608,633],[393.500,433,608],[381.500,433,483],[400,608,622],[271,408,421]]
  .forEach(([y, a, b]) => line(a, y, b, y, G, 1));
line(408, 319, 433, 325, G);

// shafts and stairs
box(447, 264.5, 9, 10, '#b30000', 'stroke-width="1.3"');
box(458, 259, 11.5, 27, '#b8b8b8');
line(458, 259, 469, 286, '#b8b8b8', .8);
line(469, 259, 458, 286, '#b8b8b8', .8);
line(469.5, 259, 469.5, 287, '#d00000', 1.3);
line(458, 287, 477, 287, '#a00000', 1.3);
box(469, 279, 8, 8, '#a00000');
parts.push('<rect x="584" y="260" width="25" height="9" fill="#000"/>');
box(583.5, 260, 26, 10, '#d02010', 'stroke-width="1.3"');
line(584, 261, 609, 269, '#ccc', .9);
line(609, 261, 584, 269, '#ccc', .9);
box(585, 270, 12, 8, '#a01010');
line(597, 270, 597, 287, '#b00000', 1.3);
box(421, 260, 11, 26, GREY);
line(421, 268, 432, 268, GREY);
line(421, 277, 432, 277, GREY);
line(424, 260, 424, 286, GREY);
box(622, 385, 11, 22, '#b8b8b8');
line(622, 385, 633, 407, '#ccc', .8);
line(633, 385, 622, 407, '#ccc', .8);
box(433, 298, 24, 9, '#666');
box(459, 329, 11, 8, GREY);
box(627, 325, 6, 19, GREY);
fill(449, 268, 4, 5, '#fff');
fill(453, 279, 5, 4, '#fff');

// columns
xs.forEach((x, i) => ys.forEach((y, j) => {
  if (i === 0 && j === 6) return;
  fill(x - 1.2, y - 1.2, 2.4, 2.4, (i + j) % 4 === 2 ? '#d0404a' : '#c030b8');
}));

// bar marks beside the beams
xs.forEach(x => ys.forEach(y => {
  if (x < 410 && y > 400) return;
  for (let k = 0; k < 3; k++) fill(x - 5 + rnd() * 9, y - 4 + rnd() * 7, 1.4, 2, k ? '#4fd898' : '#83e8c9');
}));
for (let k = 0; k < 150; k++) {
  fill(434 + rnd() * 197, 261 + rnd() * 144, 1 + rnd() * 2, 1, rnd() > .5 ? '#3fae74' : '#5fb9ba');
}
[[518,252],[515,411],[627,409],[632,308]].forEach(([x, y]) => flag(x, y, false));
[[403,340],[636,362],[415,397],[634,393]].forEach(([x, y]) => flag(x, y, true));

// notes
fill(494, 448, 28, 1, '#bbb');
fill(498, 446, 7, 1, '#ddd');
fill(517, 446, 3, 1, '#ddd');
fill(502, 451, 6, 2, '#ddd');
[10,19,8,22,13,18,12,20,19,14,8,12].forEach((w, i) => fill(489, 456 + i * 2, w, 1, i % 3 ? '#ccc' : '#eee'));
[12, 16, 14, 17].forEach((w, i) => fill(490, 459 + i * 4, w, 1, '#888'));
fill(487, 454, 1, 1, '#ccc');

// floor table
box(571.5, 440.5, 25, 35, '#aaa');
for (let y = 443; y < 474; y += 3) line(571, y, 592, y, '#888', .8);
[576, 581, 586, 592].forEach(x => line(x, 440, x, 475, '#bbb', .8));
[452, 463].forEach(y => line(592, y, 597, y, '#aaa'));
for (let y = 441; y < 471; y += 2) [573, 577, 582, 587].forEach(x => fill(x, y, 2 + rnd() * 2, 1, '#e8e8e8'));
[447, 457, 467].forEach(y => fill(594, y, 1, 2, '#ddd'));
fill(577, 470, 8, 2, '#e00000');
fill(577, 477, 4, 1, '#ddd');
fill(578, 479, 4, 1, '#bbb');

// title block
box(662.5, 471.5, 50, 21, '#444');
box(612.5, 483.5, 100, 9, '#777');
line(612, 488, 700, 488, '#777');
[617, 626, 640, 645, 652, 662, 670, 678, 692].forEach(x => line(x, 483, x, 493, '#777', .8));
for (let x = 613; x < 700; x += 4) fill(x, 485 + Math.floor(rnd() * 2) * 5, 2, 1, '#bbb');
fill(664, 484, 12, 2, '#eee');
fill(337, 490, 4, 1, '#bbb');

// coordinate tripod
line(334, 596, 334, 583, '#00e000', 1.5);
line(334, 596, 346, 596, '#ff1010', 1.5);
parts.push('<path d="M334 577l2.500 7h-5z" fill="#00e000"/><path d="M353 596l-8 2.500v-5z" fill="#ff1010"/><circle cx="334" cy="596" r="3" fill="#1030e8"/>');
parts.push('<text x="331" y="577" font-size="9" fill="#00e000">Y</text><text x="354" y="600" font-size="9" fill="#ff1010">X</text>');

document.getElementById('plan').innerHTML = parts.join('');
```
